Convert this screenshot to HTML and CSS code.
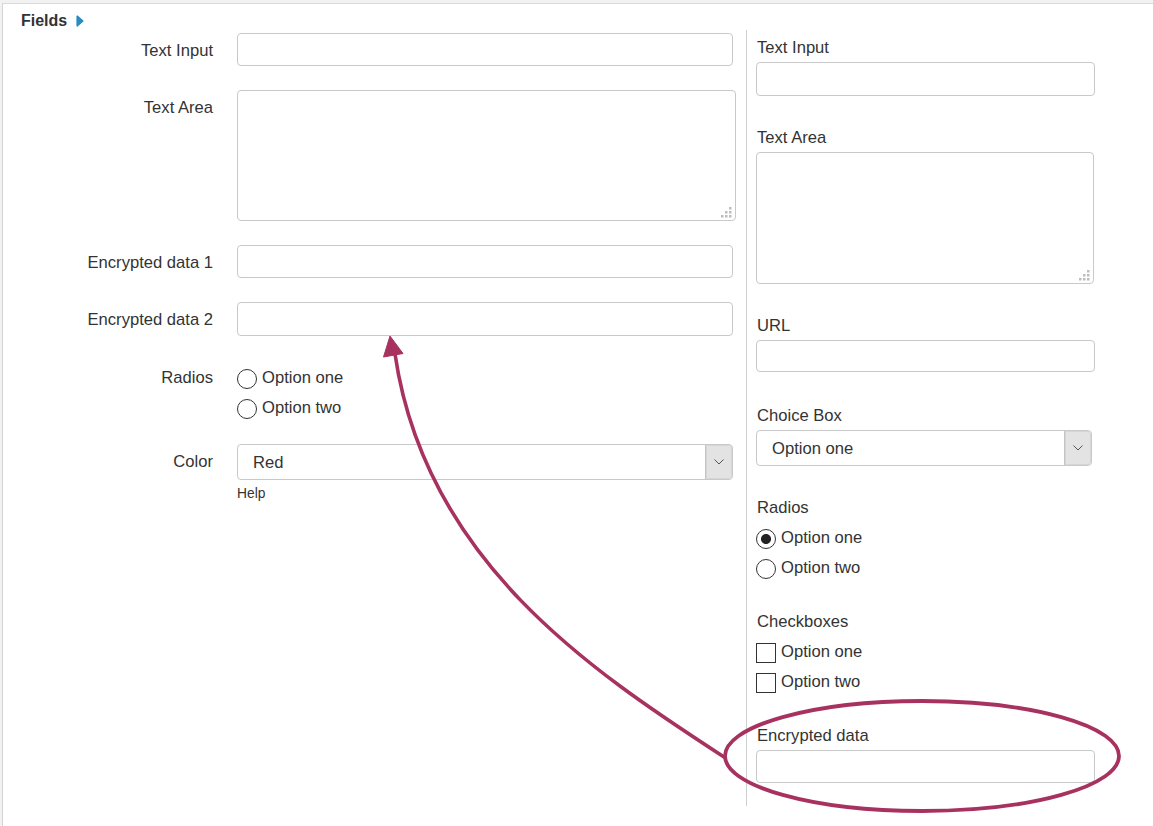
FILE: index.html
```html
<!DOCTYPE html>
<html lang="en">
<head>
<meta charset="utf-8">
<title>Fields</title>
<link rel="stylesheet" href="styles.css">
</head>
<body>
<div class="panel">
  <div class="panel-head">
    <span class="title">Fields</span>
    <svg class="caret" width="8" height="12" viewBox="0 0 8 12"><path d="M1.2 1.2 L6.8 6 L1.2 10.8 Z" fill="#2a8bbf" stroke="#2a8bbf" stroke-width="1.6" stroke-linejoin="round"/></svg>
  </div>
  <div class="main">
    <div class="form-h">
      <div class="row">
        <label class="lbl">Text Input</label>
        <div class="ctl"><input class="inp w496" type="text"></div>
      </div>
      <div class="row">
        <label class="lbl">Text Area</label>
        <div class="ctl"><div class="ta-wrap"><textarea class="ta ta-left"></textarea><svg class="grip" width="11" height="11" viewBox="0 0 11 11"><g fill="#bdbdbd"><rect x="8" y="0" width="2.5" height="2.5"/><rect x="4" y="4" width="2.5" height="2.5"/><rect x="8" y="4" width="2.5" height="2.5"/><rect x="0" y="8" width="2.5" height="2.5"/><rect x="4" y="8" width="2.5" height="2.5"/><rect x="8" y="8" width="2.5" height="2.5"/></g></svg></div></div>
      </div>
      <div class="row">
        <label class="lbl">Encrypted data 1</label>
        <div class="ctl"><input class="inp w496" type="text"></div>
      </div>
      <div class="row">
        <label class="lbl">Encrypted data 2</label>
        <div class="ctl"><input class="inp w496 h34" type="text"></div>
      </div>
      <div class="row row-radios">
        <label class="lbl">Radios</label>
        <div class="ctl choices">
          <label class="opt"><input type="radio" class="rad" name="r1">Option one</label>
          <label class="opt"><input type="radio" class="rad" name="r1">Option two</label>
        </div>
      </div>
      <div class="row">
        <label class="lbl">Color</label>
        <div class="ctl">
          <div class="sel w496"><span class="sel-val">Red</span><span class="sel-btn"><svg width="10" height="6" viewBox="0 0 10 6"><path d="M0.5 0.5 L5 5 L9.5 0.5" fill="none" stroke="#555" stroke-width="1"/></svg></span></div>
          <div class="help">Help</div>
        </div>
      </div>
    </div>
    <div class="divider"></div>
    <div class="form-v">
      <div class="grp">
        <label class="vlbl">Text Input</label>
        <input class="inp w339 h34" type="text">
      </div>
      <div class="grp">
        <label class="vlbl">Text Area</label>
        <div class="ta-wrap"><textarea class="ta ta-right"></textarea><svg class="grip" width="11" height="11" viewBox="0 0 11 11"><g fill="#bdbdbd"><rect x="8" y="0" width="2.5" height="2.5"/><rect x="4" y="4" width="2.5" height="2.5"/><rect x="8" y="4" width="2.5" height="2.5"/><rect x="0" y="8" width="2.5" height="2.5"/><rect x="4" y="8" width="2.5" height="2.5"/><rect x="8" y="8" width="2.5" height="2.5"/></g></svg></div>
      </div>
      <div class="grp grp-url">
        <label class="vlbl">URL</label>
        <input class="inp w339 h32" type="text">
      </div>
      <div class="grp">
        <label class="vlbl">Choice Box</label>
        <div class="sel w336"><span class="sel-val">Option one</span><span class="sel-btn"><svg width="10" height="6" viewBox="0 0 10 6"><path d="M0.5 0.5 L5 5 L9.5 0.5" fill="none" stroke="#555" stroke-width="1"/></svg></span></div>
      </div>
      <div class="grp grp-list">
        <label class="vlbl">Radios</label>
        <div class="choices">
          <label class="opt"><input type="radio" class="rad" name="r2" checked>Option one</label>
          <label class="opt"><input type="radio" class="rad" name="r2">Option two</label>
        </div>
      </div>
      <div class="grp grp-list">
        <label class="vlbl">Checkboxes</label>
        <div class="choices">
          <label class="opt"><input type="checkbox" class="chk">Option one</label>
          <label class="opt"><input type="checkbox" class="chk">Option two</label>
        </div>
      </div>
      <div class="grp grp-last">
        <label class="vlbl">Encrypted data</label>
        <input class="inp w339" type="text">
      </div>
    </div>
  </div>
</div>
<svg class="annot" width="1153" height="826" viewBox="0 0 1153 826">
  <ellipse cx="922" cy="756" rx="197" ry="55" fill="none" stroke="#a8325f" stroke-width="3.8"/>
  <path d="M724 757 C590 670, 425 560, 395 354" fill="none" stroke="#a8325f" stroke-width="3.6" stroke-linecap="round"/>
  <path d="M390 336 L383.5 357 L403 353.5 Z" fill="#a8325f" stroke="#a8325f" stroke-width="1" stroke-linejoin="round"/>
</svg>
</body>
</html>
```
FILE: styles.css
```css
html, body {
  margin: 0;
  padding: 0;
}
body {
  background: #f2f2f2;
  font-family: "Liberation Sans", Arial, sans-serif;
  color: #333;
  position: relative;
  width: 1153px;
  height: 826px;
  overflow: hidden;
}
.panel {
  margin: 3px 0 0 2px;
  background: #fff;
  border-top: 1px solid #d9d9d9;
  border-left: 1px solid #d4d4d4;
  height: 823px;
  box-sizing: border-box;
}
.panel-head {
  height: 26px;
  box-sizing: border-box;
  padding: 8px 0 0 18px;
  display: flex;
  align-items: center;
}
.title {
  font-weight: bold;
  font-size: 16px;
  line-height: 18px;
  color: #333;
}
.caret {
  margin-left: 9px;
  display: block;
}
.main {
  display: flex;
  align-items: stretch;
}
.form-h {
  width: 716px;
  margin-left: 17px;
  padding-top: 3px;
}
.row {
  display: grid;
  grid-template-columns: 193px 499px;
  column-gap: 24px;
  margin-bottom: 24px;
}
.lbl {
  text-align: right;
  padding-top: 8px;
  line-height: 20px;
  font-size: 16.6px;
  color: #333;
}
.inp {
  display: block;
  box-sizing: border-box;
  height: 33px;
  border: 1px solid #c9c9c9;
  border-radius: 4px;
  background: #fff;
  margin: 0;
  padding: 0 8px;
  font: inherit;
  outline: none;
}
.w496 { width: 496px; }
.w339 { width: 339px; }
.w336 { width: 336px; }
.h34 { height: 34px; }
.h32 { height: 32px; }
.ta-wrap {
  position: relative;
  display: inline-block;
  vertical-align: top;
}
.ta {
  display: block;
  box-sizing: border-box;
  border: 1px solid #c9c9c9;
  border-radius: 4px;
  margin: 0;
  resize: none;
  outline: none;
  background: #fff;
}
.ta-left { width: 499px; height: 131px; }
.ta-right { width: 338px; height: 132px; }
.grip {
  position: absolute;
  right: 4px;
  bottom: 3px;
  display: block;
}
.row-radios {
  margin-bottom: 22px;
}
.choices {
  padding-top: 2px;
}
.opt {
  display: flex;
  align-items: center;
  box-sizing: border-box;
  height: 30px;
  padding-top: 2px;
  font-size: 16.6px;
  line-height: 20px;
  color: #333;
}
.rad, .chk {
  -webkit-appearance: none;
  appearance: none;
  box-sizing: border-box;
  width: 20px;
  height: 20px;
  margin: 2px 5px 0 0;
  border: 1px solid #333;
  background: #fff;
  flex: none;
}
.rad {
  border-radius: 50%;
}
.rad:checked {
  background: radial-gradient(circle, #222 0, #222 4.6px, #fff 5.4px);
}
.chk {
  border-radius: 0;
}
.sel {
  box-sizing: border-box;
  height: 36px;
  border: 1px solid #c9c9c9;
  border-radius: 4px;
  display: flex;
  align-items: stretch;
  background: #fff;
}
.sel-val {
  flex: 1;
  padding-left: 15px;
  padding-top: 1px;
  font-size: 16.6px;
  line-height: 33px;
  color: #333;
}
.sel-btn {
  width: 26px;
  background: #e3e3e3;
  border-left: 1px solid #c4c4c4;
  border-radius: 0 3px 3px 0;
  display: flex;
  align-items: center;
  justify-content: center;
  box-shadow: inset 0 0 0 1px #d6d6d6;
}
.sel-btn svg { display: block; }
.help {
  margin-top: 6px;
  font-size: 13.8px;
  line-height: 16px;
  color: #333;
}
.divider {
  width: 1px;
  background: #cfcfcf;
  margin-left: 10px;
}
.form-v {
  padding: 7px 0 23px 9px;
}
.grp {
  margin-bottom: 31px;
}
.grp-url { margin-bottom: 33px; }
.grp-list { margin-bottom: 29px; }
.grp-last { margin-bottom: 0; }
.vlbl {
  display: block;
  font-size: 16.6px;
  line-height: 20px;
  padding-top: 1px;
  margin-bottom: 4px;
  padding-left: 1px;
  color: #333;
}
.grp-list .choices { padding-top: 0; }
.annot {
  position: absolute;
  top: 0;
  left: 0;
  pointer-events: none;
}
```
